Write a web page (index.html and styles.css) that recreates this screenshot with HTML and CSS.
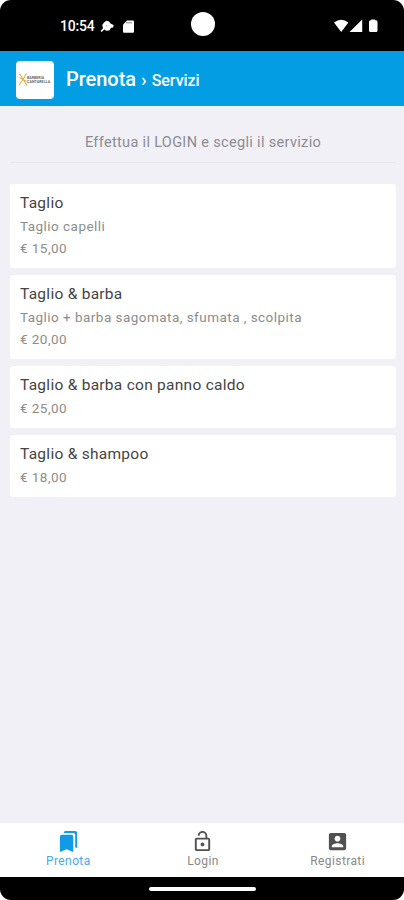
FILE: index.html
```html
<!DOCTYPE html>
<html lang="it">
<head>
<meta charset="utf-8">
<title>Prenota › Servizi</title>
<link rel="stylesheet" href="styles.css">
</head>
<body>
<div class="device">
  <div class="status">
    <span class="clock">10:54</span>
    <svg class="chat" viewBox="0 0 14 13"><path d="M4.200 2.200 L6.500 .8 L9 1.600 L10.500 3.500 L13.600 5 L13.200 7.400 L11 7.800 L9.300 10.400 L6.200 10.700 L4.300 9.400 L1.600 12 L.6 11 L3 8.300 L2.200 5Z" fill="#fff"/><circle cx="6.800" cy="5.800" r=".8" fill="#aaa"/></svg>
    <svg class="sd" viewBox="0 0 11 13"><path d="M4 .5H10Q11 .5 11 1.500V11.700Q11 12.700 10 12.700H1Q0 12.700 0 11.700V4.500Z" fill="#fff"/><path d="M4 2v1.400M6 2v1.400M8 2v1.400" stroke="#222" stroke-width=".8"/></svg>
    <span class="camera"></span>
    <svg class="signals" viewBox="0 0 45 14"><path d="M0 3.500Q7.200-2.200 14.400 3.500L7.200 13Z M28.200.5V13H15.500Z M37.200.5H41V1.300H42Q43.500 1.300 43.500 3V11.500Q43.500 13 42 13H36.500Q35 13 35 11.500V3Q35 1.300 36.500 1.300H37.200Z" fill="#fff"/></svg>
  </div>
  <header class="bar">
    <div class="logo">
      <svg class="mark" viewBox="0 0 11 16"><path d="M.8 2C3 3 3.200 6 5.200 8S7 13 9.500 14.200M9 1.500C6.500 3.500 6.800 6 5 8S2.500 11 1 14M1 6l8 4" fill="none" stroke="#dcae48" stroke-width="1.100"/></svg>
      <div class="brand"><span>BARBERIA</span><span>CANTARELLA</span></div>
    </div>
    <h1 class="title">Prenota <span class="sep">›</span> <span class="sub">Servizi</span></h1>
  </header>
  <main class="content">
    <p class="notice">Effettua il LOGIN e scegli il servizio</p>
    <section class="list">
      <article class="card tall"><h2>Taglio</h2><p class="desc">Taglio capelli</p><p>€ 15,00</p></article>
      <article class="card tall"><h2>Taglio &amp; barba</h2><p class="desc">Taglio + barba sagomata, sfumata , scolpita</p><p>€ 20,00</p></article>
      <article class="card"><h2>Taglio &amp; barba con panno caldo</h2><p>€ 25,00</p></article>
      <article class="card"><h2>Taglio &amp; shampoo</h2><p>€ 18,00</p></article>
    </section>
  </main>
  <nav class="tabs">
    <a class="tab active"><svg viewBox="0 0 24 24"><path d="M19 18l2 1V3c0-1.100-.9-2-2-2H8.990C7.890 1 7 1.900 7 3h10c1.100 0 2 .9 2 2v13zM15 5H5c-1.100 0-2 .9-2 2v16l7-3 7 3V7c0-1.100-.9-2-2-2z"/></svg><span>Prenota</span></a>
    <a class="tab"><svg viewBox="0 0 24 24"><path d="M12 17c1.100 0 2-.9 2-2s-.9-2-2-2-2 .9-2 2 .9 2 2 2zm6-9h-1V6c0-2.760-2.240-5-5-5S7 3.240 7 6h1.900c0-1.710 1.390-3.100 3.100-3.100 1.710 0 3.100 1.390 3.100 3.100v2H6c-1.100 0-2 .9-2 2v10c0 1.100.9 2 2 2h12c1.100 0 2-.9 2-2V10c0-1.100-.9-2-2-2zm0 12H6V10h12v10z"/></svg><span>Login</span></a>
    <a class="tab"><svg viewBox="0 0 24 24"><path d="M3 5v14c0 1.100.89 2 2 2h14c1.100 0 2-.9 2-2V5c0-1.100-.9-2-2-2H5c-1.110 0-2 .9-2 2zm12 4c0 1.660-1.340 3-3 3s-3-1.340-3-3 1.340-3 3-3 3 1.340 3 3zm-9 8c0-2 4-3.100 6-3.100s6 1.100 6 3.100v1H6v-1z"/></svg><span>Registrati</span></a>
  </nav>
  <div class="system"><span class="handle"></span></div>
</div>
</body>
</html>
```
FILE: styles.css
```css
* { box-sizing: border-box; }
body { margin: 0; background: #fff; font-family: Roboto, "Liberation Sans", sans-serif; }
h1, h2, p { margin: 0; font-weight: 400; }
svg { display: block; flex: none; }
.device { width: 404px; height: 900px; display: flex; flex-direction: column; overflow: hidden; border-radius: 11px; background: #f1f0f7; }
.status { height: 51px; flex: none; background: #000; color: #fff; display: flex; align-items: center; padding: 1px 25px 0 60px; }
.clock { width: 40px; font-size: 14px; font-weight: 500; letter-spacing: -.2px; line-height: 16px; }
.chat { width: 14px; height: 13px; }
.sd { width: 11px; height: 13px; margin-left: 9px; }
.camera { width: 24px; height: 24px; border-radius: 50%; background: #fff; margin: -4px 0 0 57px; }
.signals { width: 45px; height: 14px; margin-left: auto; }
.bar { height: 55px; flex: none; background: #039de4; display: flex; align-items: center; padding: 2px 16px 0; color: #fff; }
.logo { width: 38px; height: 38px; background: #fff; border-radius: 4px; display: flex; align-items: center; padding-left: 2px; overflow: hidden; }
.mark { width: 11px; height: 15px; }
.brand { display: flex; flex-direction: column; color: #666; font-size: 3.6px; font-weight: 700; line-height: 4px; margin-left: -2px; }
.brand span + span { letter-spacing: .1px; }
.title { margin-left: 12px; font-size: 20px; line-height: 24px; font-weight: 500; letter-spacing: -.03px; white-space: nowrap; padding-top: 1px; }
.sep { font-size: 19px; }
.sub { font-size: 16px; }
.content { flex: 1; padding: 7px 8px 0 10px; }
.notice { height: 50px; border-bottom: 1px solid #e8e7ed; padding-top: 21px; text-align: center; color: #8c8b91; font-size: 14.5px; line-height: 18px; letter-spacing: .33px; }
.list { display: flex; flex-direction: column; gap: 7.2px; margin-top: 20.5px; }
.card { height: 62px; border-radius: 3px; background: #fff; padding: 9px 10px 0; color: #8c8c8c; font-size: 13.5px; line-height: 22px; letter-spacing: .45px; }
.card.tall { height: 84px; }
.card h2 { color: #444; font-size: 15.5px; line-height: 20px; margin-bottom: 2px; letter-spacing: .27px; }
.card .desc { letter-spacing: .46px; }
.tabs { height: 54px; flex: none; background: #fff; display: grid; grid-template-columns: repeat(3, 1fr); }
.tab { display: flex; flex-direction: column; align-items: center; padding: 7px 0 0 2px; color: #888; font-size: 12px; line-height: 17px; letter-spacing: .4px; }
.tab svg { width: 23px; height: 23px; fill: #505050; }
.tab.active { color: #4aa9e9; }
.tab.active svg { fill: #119be6; }
.system { height: 23px; flex: none; background: #000; display: flex; justify-content: center; padding-top: 10px; }
.handle { width: 107px; height: 4px; border-radius: 2px; background: #fff; }
```
